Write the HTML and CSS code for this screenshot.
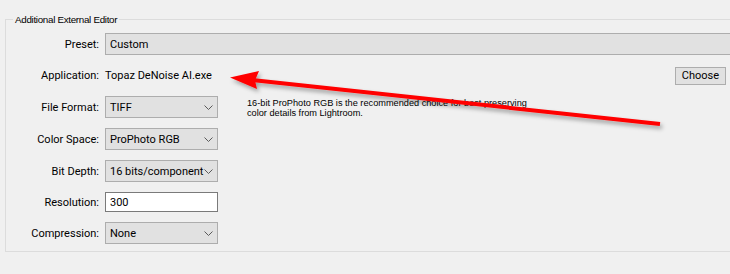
FILE: index.html
```html
<!DOCTYPE html>
<html>
<head>
<meta charset="utf-8">
<link rel="stylesheet" href="styles.css">
</head>
<body>
<div class="group">
  <span class="title">Additional External Editor</span>
  <div class="grid">
    <div class="lbl">Preset:</div>
    <div class="sel wide">Custom</div>

    <div class="lbl">Application:</div>
    <div class="app">
      <span>Topaz DeNoise AI.exe</span>
      <span class="btn">Choose</span>
    </div>

    <div class="lbl">File Format:</div>
    <div class="sel">TIFF<svg class="chev" width="9" height="5" viewBox="0 0 9 5"><path d="M0.5 0.5 L4.5 4.5 L8.5 0.5" fill="none" stroke="#5a5a5a" stroke-width="1"/></svg></div>
    <div class="help">16-bit ProPhoto RGB is the recommended choice for best preserving<br>color details from Lightroom.</div>

    <div class="lbl">Color Space:</div>
    <div class="sel">ProPhoto RGB<svg class="chev" width="9" height="5" viewBox="0 0 9 5"><path d="M0.5 0.5 L4.5 4.5 L8.5 0.5" fill="none" stroke="#5a5a5a" stroke-width="1"/></svg></div>

    <div class="lbl">Bit Depth:</div>
    <div class="sel">16 bits/component<svg class="chev" width="9" height="5" viewBox="0 0 9 5"><path d="M0.5 0.5 L4.5 4.5 L8.5 0.5" fill="none" stroke="#5a5a5a" stroke-width="1"/></svg></div>

    <div class="lbl">Resolution:</div>
    <div class="inp">300</div>

    <div class="lbl">Compression:</div>
    <div class="sel">None<svg class="chev" width="9" height="5" viewBox="0 0 9 5"><path d="M0.5 0.5 L4.5 4.5 L8.5 0.5" fill="none" stroke="#5a5a5a" stroke-width="1"/></svg></div>
  </div>
</div>
<svg class="arrow" width="730" height="274" viewBox="0 0 730 274">
  <defs>
    <filter id="sh" x="-10%" y="-50%" width="120%" height="200%">
      <feDropShadow dx="2" dy="3" stdDeviation="2" flood-color="#000" flood-opacity="0.35"/>
    </filter>
  </defs>
  <g filter="url(#sh)">
    <line x1="252" y1="80" x2="660" y2="124" stroke="#ff0000" stroke-width="4"/>
    <polygon points="230,77.5 259,71 255,80.5 257,89" fill="#ff0000"/>
  </g>
</svg>
</body>
</html>
```
FILE: styles.css
```css
html, body {
  margin: 0;
  padding: 0;
  background: #f0f0f0;
  overflow: hidden;
}
body {
  width: 730px;
  height: 274px;
  font-family: Roboto, "Noto Sans", sans-serif;
  font-size: 11px;
  color: #000;
}
.group {
  margin: 19px 0 0 5px;
  border: 1px solid #dcdcdc;
  border-right: none;
  height: 233px;
  box-sizing: border-box;
}
.title {
  display: block;
  width: max-content;
  margin: -8px 0 0 7px;
  padding: 0 2px;
  background: #f0f0f0;
  line-height: 16px;
  height: 16px;
  font-family: "Liberation Sans", Arial, sans-serif;
  font-size: 9.8px;
  letter-spacing: -0.3px;
}
.grid {
  display: grid;
  grid-template-columns: 93px 113px 1fr;
  grid-template-rows: 22px 21px 22px 22px 22px 20px 22px;
  column-gap: 6px;
  row-gap: 10px;
  margin-top: 5px;
}
.lbl {
  grid-column: 1;
  display: flex;
  align-items: center;
  justify-content: flex-end;
}
.sel {
  grid-column: 2;
  position: relative;
  box-sizing: border-box;
  background: #e1e1e1;
  border: 1px solid #adadad;
  padding-left: 4px;
  display: flex;
  align-items: center;
}
.sel.wide {
  grid-column: 2 / 4;
  border-right: none;
}
.chev {
  position: absolute;
  right: 4px;
  top: 8px;
}
.inp {
  grid-column: 2;
  box-sizing: border-box;
  background: #fff;
  border: 1px solid #7a7a7a;
  padding-left: 4px;
  display: flex;
  align-items: center;
}
.app {
  grid-column: 2 / 4;
  display: flex;
  align-items: center;
  justify-content: space-between;
  padding-right: 4px;
}
.btn {
  box-sizing: border-box;
  width: 51px;
  height: 18px;
  background: #e1e1e1;
  border: 1px solid #adadad;
  display: flex;
  align-items: center;
  justify-content: center;
}
.help {
  grid-column: 3;
  grid-row: 3 / 5;
  margin-left: 23px;
  margin-top: 2px;
  font-family: "Liberation Sans", Arial, sans-serif;
  font-size: 9.2px;
  line-height: 10px;
}
.arrow {
  position: absolute;
  left: 0;
  top: 0;
  pointer-events: none;
}
```
